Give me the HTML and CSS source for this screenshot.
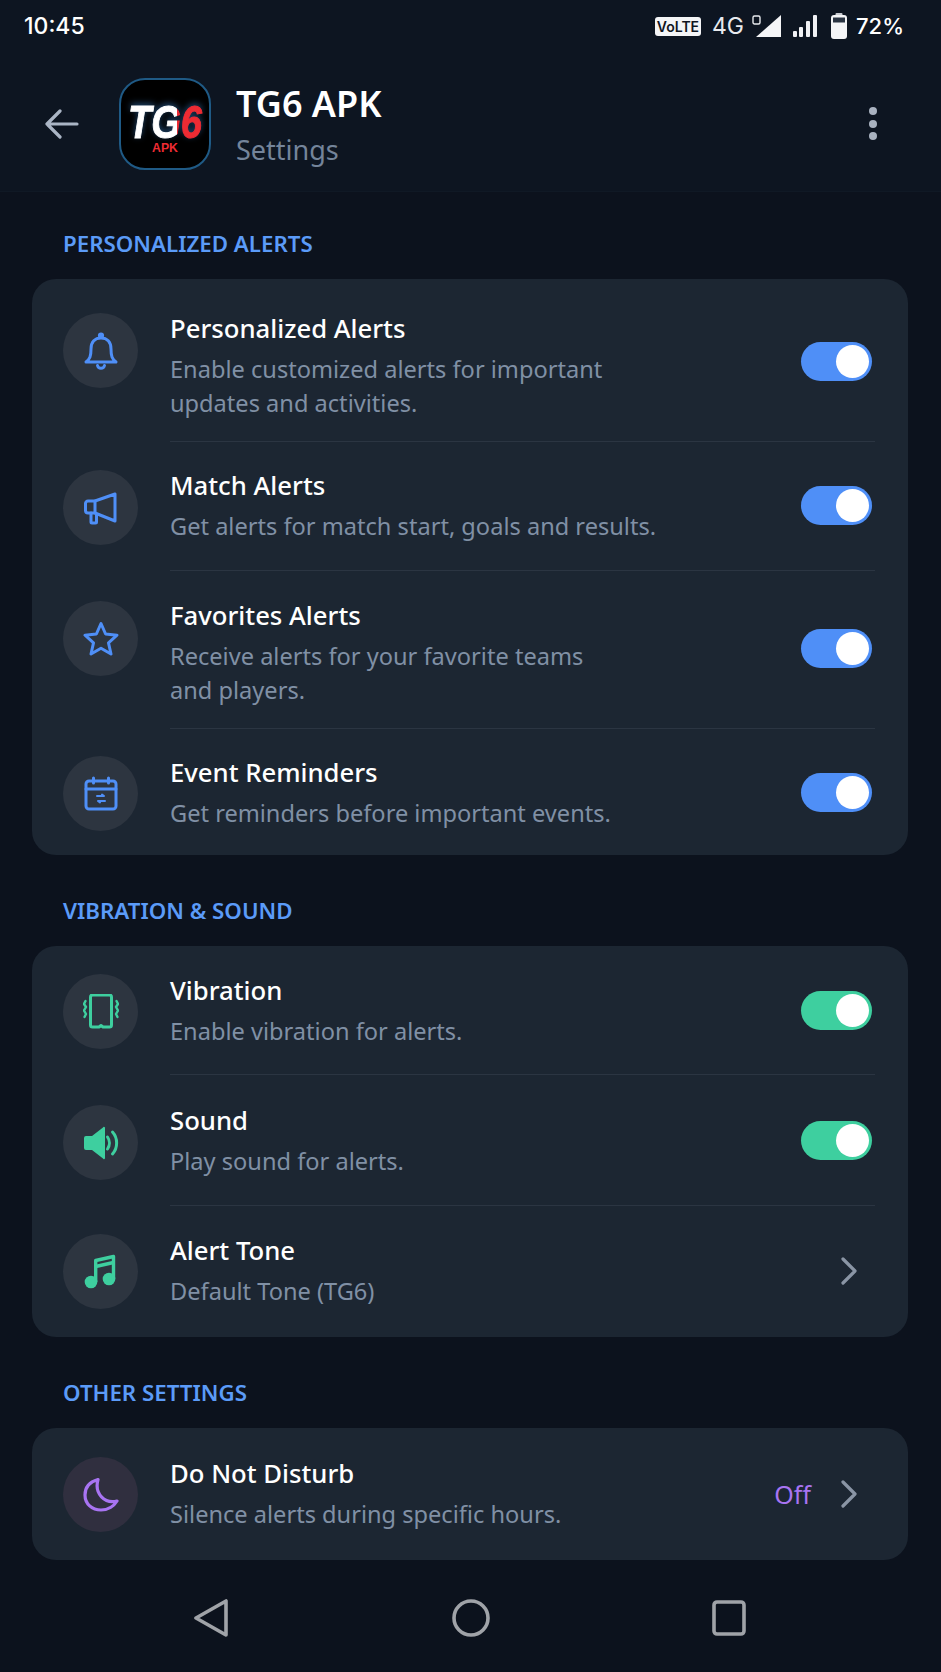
FILE: index.html
```html
<!DOCTYPE html>
<html>
  <head>
    <title>TG6 APK - Settings</title>
    <meta charset="UTF-8">
    <meta name="viewport" content="width=device-width, initial-scale=1">
    <link rel="stylesheet" href="styles.css">
  </head>
  <body>
    <div class="status-bar">
      <span class="status-time">10:45</span>
      <div class="status-right">
        <span class="volte">VoLTE</span>
        <span class="net">4G</span>
        <svg class="sig-a" width="30" height="24" viewBox="0 0 30 24"><rect x="1" y="2" width="7" height="8" rx="1.5" fill="none" stroke="#e8eaee" stroke-width="1.4"/><path d="M4 23 L29 1 V23 Z" fill="#f4f5f7"/></svg>
        <svg class="sig-b" width="26" height="24" viewBox="0 0 26 24" fill="#f0f1f4"><rect x="1" y="17" width="4" height="6" rx="1"/><rect x="7" y="13" width="4" height="10" rx="1"/><rect x="14" y="7" width="4" height="16" rx="1"/><rect x="21" y="1" width="4" height="22" rx="1"/></svg>
        <svg class="batt" width="16" height="26" viewBox="0 0 16 26"><rect x="4.500" y="0" width="7" height="3" rx="1" fill="#c9ccd2"/><rect x="0" y="2" width="16" height="24" rx="3" fill="#f4f5f7"/><rect x="2" y="4.500" width="12" height="5" fill="#2a3442"/></svg>
        <span class="status-pct">72%</span>
      </div>
    </div>

    <header class="app-header">
      <svg class="back" width="34" height="30" viewBox="0 0 34 30" fill="none" stroke="#aab5c5" stroke-width="3.200" stroke-linecap="round" stroke-linejoin="round"><path d="M2 15 H32 M15 2 L2 15 L15 28"/></svg>
      <svg class="app-logo" width="92" height="92" viewBox="0 0 92 92">
        <defs>
          <linearGradient id="logo-fill" gradientUnits="userSpaceOnUse" x1="0" y1="0" x2="92" y2="0">
            <stop offset="0.630" stop-color="#fff"/>
            <stop offset="0.630" stop-color="#ee2b33"/>
          </linearGradient>
        </defs>
        <rect x="1" y="1" width="90" height="90" rx="25" fill="#000" stroke="#1f5a85" stroke-width="2"/>
        <text class="logo-mark" x="9" y="60" textLength="74" lengthAdjust="spacingAndGlyphs" fill="url(#logo-fill)" stroke="url(#logo-fill)">TG6</text>
        <text class="logo-sub" x="33" y="74" textLength="26" lengthAdjust="spacingAndGlyphs">APK</text>
      </svg>
      <div class="app-title">
        <div class="app-name">TG6 APK</div>
        <div class="app-page">Settings</div>
      </div>
      <div class="more"><i></i><i></i><i></i></div>
    </header>

    <main class="content">
      <h2 class="section-label">PERSONALIZED ALERTS</h2>
      <section class="card">
        <div class="row">
          <div class="row-icon row-icon-first">
            <svg width="36" height="40" viewBox="0 0 36 40" fill="none" stroke="#4f8ff7" stroke-width="3" stroke-linecap="round" stroke-linejoin="round"><circle cx="18" cy="4.500" r="1.600" fill="#4f8ff7"/><path d="M3 31 C7 28 8 25 8 18 C8 11 12 7 18 7 C24 7 28 11 28 18 C28 25 29 28 33 31 Z"/><path d="M14.500 34.500 a3.600 3.600 0 0 0 7 0"/></svg>
          </div>
          <div class="row-body row-first">
            <div class="row-text">
              <div class="row-title">Personalized Alerts</div>
              <div class="row-desc">Enable customized alerts for important<br>updates and activities.</div>
            </div>
            <span class="toggle"></span>
          </div>
        </div>
        <div class="row">
          <div class="row-icon">
            <svg width="36" height="36" viewBox="0 0 36 36" fill="none" stroke="#4f8ff7" stroke-width="3" stroke-linecap="round" stroke-linejoin="round"><path d="M12 11 L32 4 V31 L12 23 H5 a2.500 2.500 0 0 1 -2.500 -2.500 V13.500 A2.500 2.500 0 0 1 5 11 Z"/><path d="M12 11 V23"/><path d="M8 23 V32 a1 1 0 0 0 1 1 H12.500 a1 1 0 0 0 1 -1 V24"/></svg>
          </div>
          <div class="row-body">
            <div class="row-text">
              <div class="row-title">Match Alerts</div>
              <div class="row-desc">Get alerts for match start, goals and results.</div>
            </div>
            <span class="toggle"></span>
          </div>
        </div>
        <div class="row">
          <div class="row-icon row-icon-mid">
            <svg width="36" height="36" viewBox="0 0 36 36" fill="none" stroke="#4f8ff7" stroke-width="3" stroke-linejoin="round"><path d="M18 2.500 L22.600 13 L34 14.200 L25.500 21.800 L28 33 L18 27.200 L8 33 L10.500 21.800 L2 14.200 L13.400 13 Z"/></svg>
          </div>
          <div class="row-body row-tall">
            <div class="row-text">
              <div class="row-title">Favorites Alerts</div>
              <div class="row-desc">Receive alerts for your favorite teams<br>and players.</div>
            </div>
            <span class="toggle"></span>
          </div>
        </div>
        <div class="row">
          <div class="row-icon row-icon-high">
            <svg width="36" height="36" viewBox="0 0 36 36" fill="none" stroke="#4f8ff7" stroke-width="3" stroke-linecap="round" stroke-linejoin="round"><rect x="3" y="5" width="30" height="28" rx="3"/><path d="M3 13 H33 M10.500 2 V7 M25.500 2 V7"/><path d="M14 20 h7 l-2 -1.500 M22 25 h-7 l2 1.500" stroke-width="2"/></svg>
          </div>
          <div class="row-body row-event">
            <div class="row-text">
              <div class="row-title">Event Reminders</div>
              <div class="row-desc">Get reminders before important events.</div>
            </div>
            <span class="toggle"></span>
          </div>
        </div>
      </section>

      <h2 class="section-label">VIBRATION &amp; SOUND</h2>
      <section class="card">
        <div class="row">
          <div class="row-icon row-icon-high">
            <svg width="36" height="36" viewBox="0 0 36 36" fill="none" stroke="#3ecf9f" stroke-width="3" stroke-linecap="round" stroke-linejoin="round"><path d="M7.500 3 a2 2 0 0 1 2 -2 H26.500 a2 2 0 0 1 2 2 V31 a2 2 0 0 1 -2 2 H20 l-2 -1.500 l-2 1.500 H9.500 a2 2 0 0 1 -2 -2 Z"/><path d="M2.500 7 l-1.500 3 l2 3 l-2 3.500 l2 3.500 l-1.500 3 M33.500 7 l1.500 3 l-2 3 l2 3.500 l-2 3.500 l1.500 3" stroke-width="2.400"/></svg>
          </div>
          <div class="row-body row-vibration">
            <div class="row-text">
              <div class="row-title">Vibration</div>
              <div class="row-desc">Enable vibration for alerts.</div>
            </div>
            <span class="toggle toggle-green"></span>
          </div>
        </div>
        <div class="row">
          <div class="row-icon row-icon-mid">
            <svg width="36" height="36" viewBox="0 0 36 36" fill="none" stroke="#3ecf9f" stroke-width="3" stroke-linecap="round"><path d="M1 13 a2 2 0 0 1 2 -2 H9 L20 2.500 a1 1 0 0 1 2 1 V32.500 a1 1 0 0 1 -2 1 L9 25 H3 a2 2 0 0 1 -2 -2 Z" fill="#3ecf9f" stroke="none"/><path d="M24.500 12 C27 15.500 27 20.500 24.500 24"/><path d="M29.500 7 C35 13 35 23 29.500 29"/></svg>
          </div>
          <div class="row-body row-sound">
            <div class="row-text">
              <div class="row-title">Sound</div>
              <div class="row-desc">Play sound for alerts.</div>
            </div>
            <span class="toggle toggle-green"></span>
          </div>
        </div>
        <div class="row">
          <div class="row-icon">
            <svg width="36" height="36" viewBox="0 0 36 36" fill="none" stroke="#3ecf9f" stroke-width="3.400" stroke-linejoin="round"><circle cx="8" cy="28" r="6.300" fill="#3ecf9f" stroke="none"/><circle cx="26" cy="25" r="6.300" fill="#3ecf9f" stroke="none"/><path d="M12.700 28 V6.500 L30.500 2.500 V25"/><path d="M12.700 12.500 L30.500 8.500"/></svg>
          </div>
          <div class="row-body row-last">
            <div class="row-text">
              <div class="row-title">Alert Tone</div>
              <div class="row-desc">Default Tone (TG6)</div>
            </div>
            <svg class="chevron" width="20" height="28" viewBox="0 0 20 28" fill="none" stroke="#8a95a5" stroke-width="3.200" stroke-linecap="round" stroke-linejoin="round"><path d="M4 2 L16 14 L4 26"/></svg>
          </div>
        </div>
      </section>

      <h2 class="section-label">OTHER SETTINGS</h2>
      <section class="card">
        <div class="row">
          <div class="row-icon tint-purple">
            <svg width="36" height="36" viewBox="0 0 36 36" fill="none" stroke="#a874f2" stroke-width="3.200" stroke-linecap="round" stroke-linejoin="round"><path d="M15 2.500 C6 5 2 11 2 18 C2 27 9 33 18 33 C25 33 31 29 34 24 C22 27 11 17 15 2.500 Z"/></svg>
          </div>
          <div class="row-body row-last">
            <div class="row-text">
              <div class="row-title">Do Not Disturb</div>
              <div class="row-desc">Silence alerts during specific hours.</div>
            </div>
            <span class="row-value">Off</span>
            <svg class="chevron" width="20" height="28" viewBox="0 0 20 28" fill="none" stroke="#8a95a5" stroke-width="3.200" stroke-linecap="round" stroke-linejoin="round"><path d="M4 2 L16 14 L4 26"/></svg>
          </div>
        </div>
      </section>
    </main>

    <nav class="nav-bar">
      <svg width="36" height="38" viewBox="0 0 36 38" fill="none" stroke="#a0a3a8" stroke-width="3.600" stroke-linejoin="round"><path d="M3 19 L33 2 V36 Z"/></svg>
      <svg width="38" height="38" viewBox="0 0 38 38" fill="none" stroke="#a0a3a8" stroke-width="3.600"><circle cx="19" cy="19" r="17"/></svg>
      <svg width="34" height="36" viewBox="0 0 34 36" fill="none" stroke="#a0a3a8" stroke-width="3.600"><rect x="2" y="2" width="30" height="32" rx="3"/></svg>
    </nav>
  </body>
</html>
```

FILE: styles.css
```css
/* Dark settings screen */
body {
	margin: 0;
	height: 1672px;
	overflow: hidden;
	background-color: #0c121d;
	font-family: "Noto Sans", Arial, sans-serif;
	color: #fff;
}

/* status bar */
.status-bar {
	height: 52px;
	display: flex;
	align-items: center;
	justify-content: space-between;
	padding: 0 37px 0 24px;
	background-color: #0d1521;
}
.status-time {
	font-family: Inter, sans-serif;
	font-size: 23px;
	font-weight: 500;
}
.status-right {
	display: flex;
	align-items: center;
}
.volte {
	background-color: #f4f5f7;
	color: #10161f;
	font-family: Inter, sans-serif;
	font-size: 14px;
	font-weight: 600;
	line-height: 19px;
	width: 46px;
	text-align: center;
	border-radius: 3px;
}
.net {
	font-family: Inter, sans-serif;
	font-size: 23px;
	margin-left: 11px;
	color: #e8eaee;
}
.sig-a {
	margin-left: 8px;
}
.sig-b {
	margin-left: 10px;
}
.batt {
	margin-left: 13px;
}
.status-pct {
	font-family: Inter, sans-serif;
	font-size: 22px;
	font-weight: 500;
	margin-left: 9px;
}

/* app header */
.app-header {
	height: 140px;
	box-sizing: border-box;
	display: flex;
	align-items: center;
	padding: 4px 64px 0 45px;
	background-color: #0d1521;
	border-bottom: 1px solid #101925;
}
.back {
	margin-right: 40px;
}
.app-logo {
	flex: none;
}
.logo-mark {
	font-family: "Liberation Sans", Arial, sans-serif;
	font-size: 47px;
	font-weight: bold;
	font-style: italic;
	stroke-width: 1px;
	filter: drop-shadow(0 -2px 3px rgba(60, 140, 220, 0.5));
}
.logo-sub {
	font-family: "Liberation Sans", Arial, sans-serif;
	font-size: 12.5px;
	font-weight: bold;
	fill: #ee2b33;
}
.app-title {
	flex: 1;
	margin: 7px 0 0 25px;
}
.app-name {
	font-size: 36px;
	font-weight: 600;
	line-height: 46px;
}
.app-page {
	font-size: 27px;
	line-height: 46px;
	color: #74849a;
}
.more i {
	display: block;
	width: 8px;
	height: 8px;
	margin: 4.5px 0;
	border-radius: 50%;
	background-color: #a9b2c0;
}

/* list */
.content {
	padding: 38px 33px 0 32px;
}
.section-label {
	margin: 0 0 21px 31px;
	font-size: 22.3px;
	font-weight: 600;
	line-height: 28px;
	color: #5b9bf8;
}
.card {
	margin-bottom: 42px;
	background-color: #1c2632;
	border-radius: 24px;
	padding: 1px 33px 0 31px;
}
.card:last-child {
	margin-bottom: 0;
}
.row {
	display: flex;
	align-items: flex-start;
}
.row-icon {
	flex: none;
	width: 75px;
	height: 75px;
	margin: 28px 32px 0 0;
	border-radius: 50%;
	background-color: #2d3540;
	display: flex;
	align-items: center;
	justify-content: center;
}
.row-icon-first {
	margin-top: 33px;
}
.row-icon-mid {
	margin-top: 30px;
}
.row-icon-high {
	margin-top: 27px;
}
.tint-purple {
	background-color: #302f3f;
}
.row-body {
	flex: 1;
	display: flex;
	align-items: center;
	padding: 26.5px 0 27px;
	border-bottom: 1px solid #2b3542;
}
.row-first {
	padding: 31.5px 0 21px;
}
.row-tall {
	padding: 27.5px 0 21px;
}
.row-vibration {
	padding-bottom: 26px;
}
.row-sound {
	padding-top: 28.5px;
}
.row-event {
	border-bottom: none;
	padding-bottom: 25px;
}
.row-last {
	border-bottom: none;
	padding: 27.5px 0 29px;
}
.row-text {
	flex: 1;
}
.row-title {
	font-size: 25.7px;
	font-weight: 500;
	line-height: 34px;
	margin-bottom: 6.5px;
}
.row-desc {
	font-size: 23.6px;
	line-height: 34px;
	color: #8090a5;
}
.toggle {
	flex: none;
	align-self: flex-start;
	position: relative;
	width: 71px;
	height: 39px;
	margin: 17.5px 3px 0 0;
	border-radius: 20px;
	background-color: #4f8ff7;
}
.row-first .toggle,
.row-tall .toggle {
	margin-top: 30.5px;
}
.toggle::after {
	content: "";
	position: absolute;
	top: 3px;
	right: 3px;
	width: 33px;
	height: 33px;
	border-radius: 50%;
	background-color: #fff;
}
.toggle-green {
	background-color: #3ecf9f;
}
.chevron {
	flex: none;
	margin-right: 16px;
}
.row-value {
	font-size: 25px;
	color: #a874f2;
	margin-right: 28px;
}

/* nav buttons */
.nav-bar {
	height: 112px;
	box-sizing: border-box;
	display: flex;
	justify-content: space-between;
	align-items: center;
	padding: 4px 195px 0 193px;
}
```
